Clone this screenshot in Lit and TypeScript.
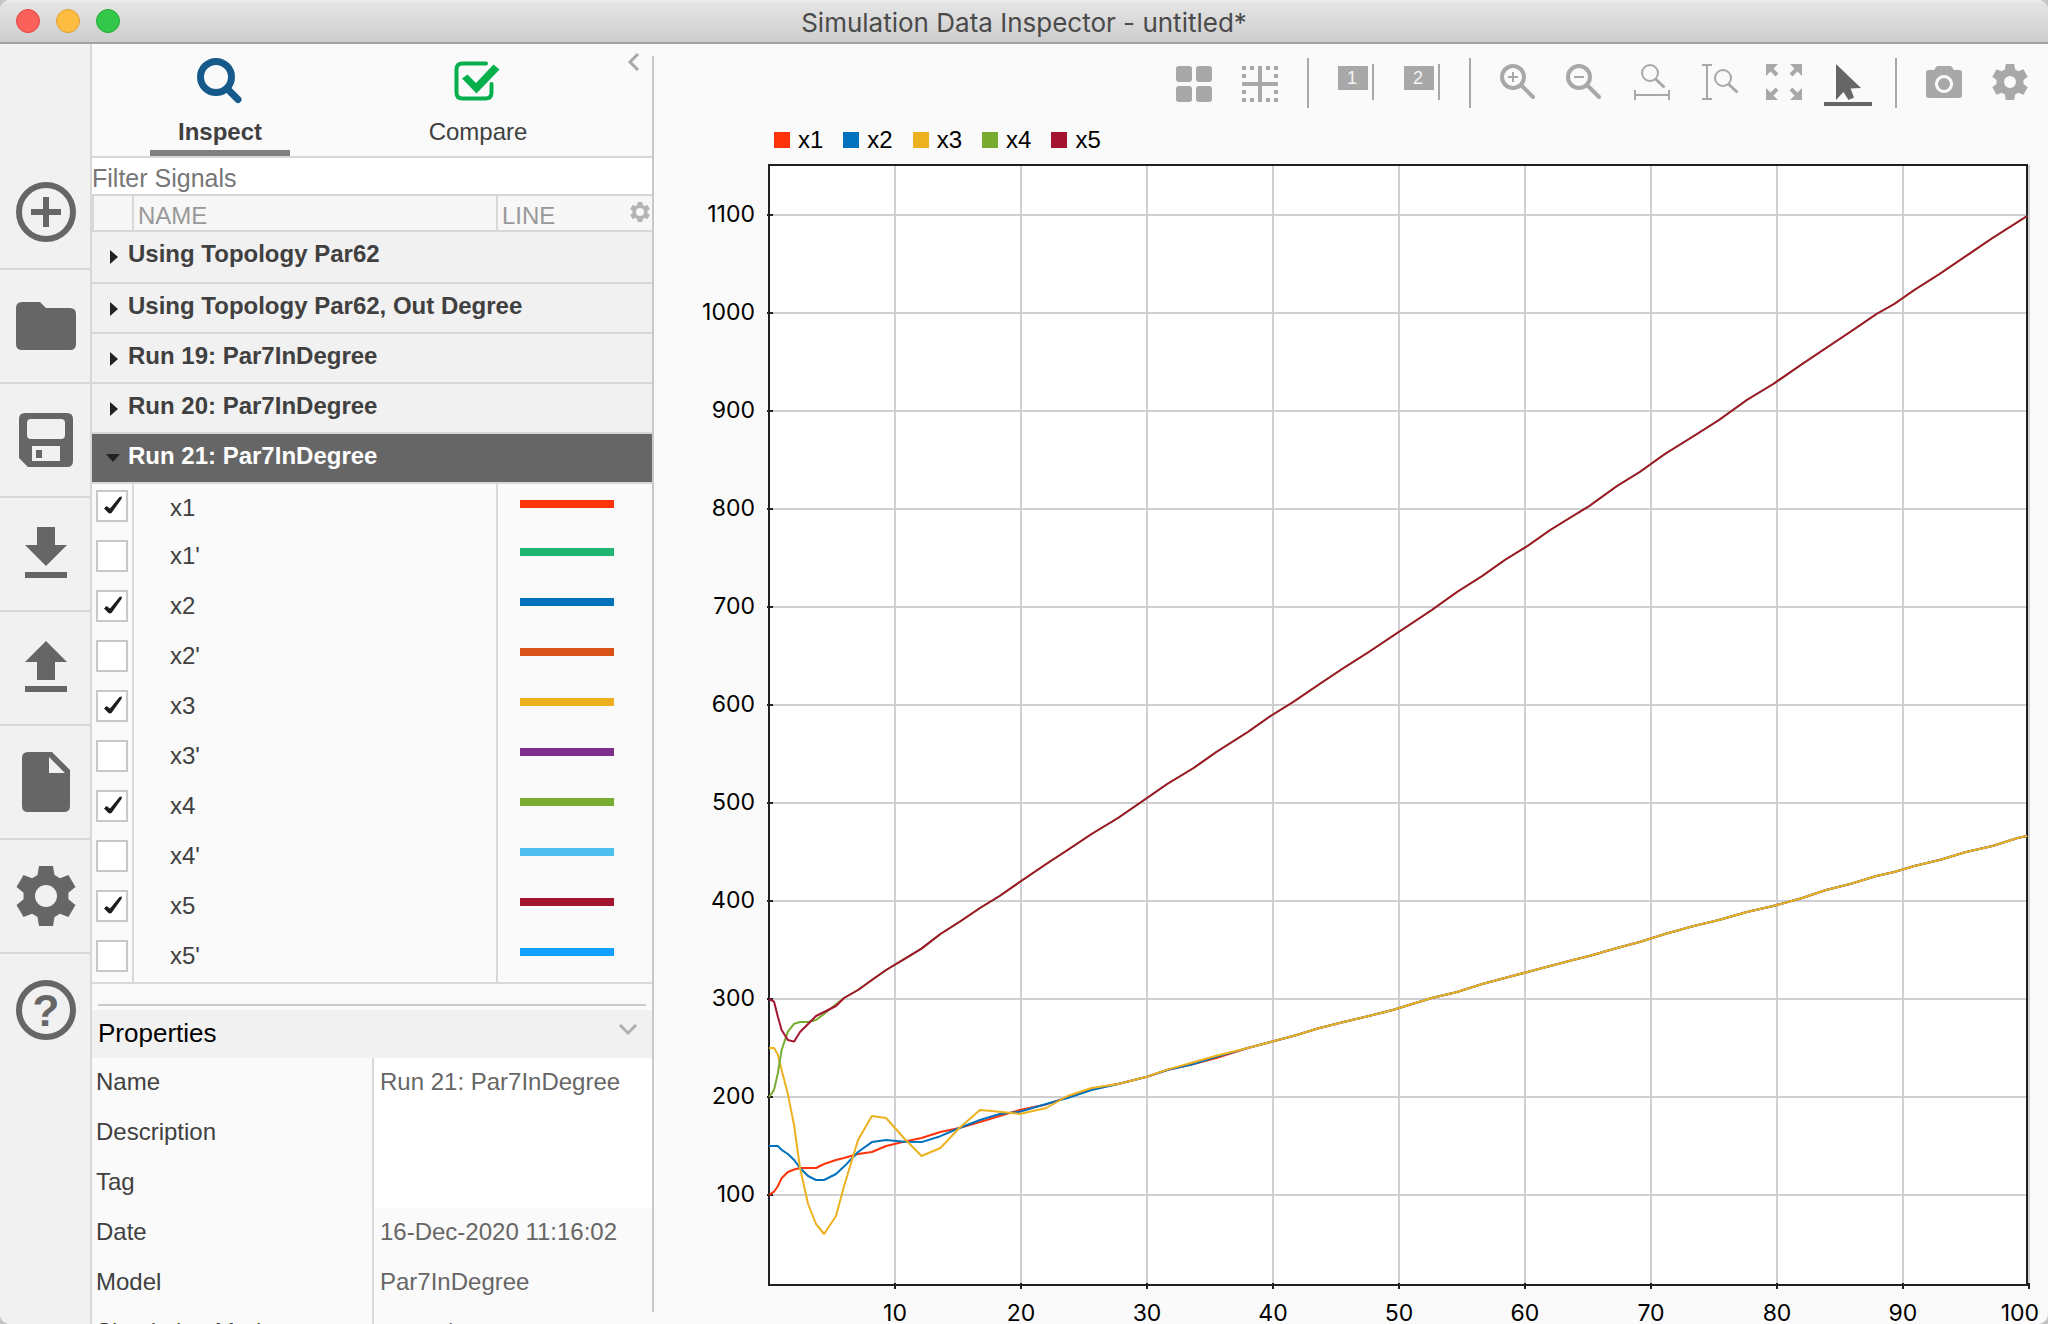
import { LitElement, html, svg, css, nothing } from "lit";
import { customElement, state } from "lit/decorators.js";
import { classMap } from "lit/directives/class-map.js";

/* Closed outline of a six-toothed gear centred on (c, c) with outer radius r. */
function gearPath(c: number, r: number, hole: number): string {
  const k = r / 30;
  const tooth = [[-8.5, -21], [-7, -30], [7, -30], [8.5, -21]];
  const points: string[] = [];
  for (let i = 0; i < 6; i++) {
    const a = (i * Math.PI) / 3;
    for (const [x, y] of tooth) {
      const px = c + k * (x * Math.cos(a) - y * Math.sin(a));
      const py = c + k * (x * Math.sin(a) + y * Math.cos(a));
      points.push(`${px.toFixed(2)} ${py.toFixed(2)}`);
    }
  }
  return `M${points.join("L")}ZM${c - hole} ${c}a${hole} ${hole} 0 1 0 ${hole * 2} 0a${hole} ${hole} 0 1 0 ${-hole * 2} 0Z`;
}

const railItems = [
  { label: "New", art: svg`<circle cx="30" cy="30" r="27" fill="none" stroke="currentColor" stroke-width="6"/><path d="M30 15v30M15 30h30" stroke="currentColor" stroke-width="6"/>` },
  { label: "Open", art: svg`<path d="M6 6h18l6 6h24q6 0 6 6v30q0 6-6 6H6q-6 0-6-6V12q0-6 6-6Z"/>` },
  { label: "Save", art: svg`<path fill-rule="evenodd" d="M9 3h42q6 0 6 6v42q0 6-6 6H12l-9-9V9q0-6 6-6ZM15 9q-4 0-4 4v12q0 4 4 4h30q4 0 4-4V13q0-4-4-4ZM16 36v15h28V36Z"/><path d="M20 40h6v8h-6z"/>` },
  { label: "Import", art: svg`<path d="M21 3h18v18h12L30 42 9 21h12ZM9 48h42v6H9Z"/>` },
  { label: "Export", art: svg`<path d="M30 3 51 24H39v18H21V24H9ZM9 48h42v6H9Z"/>` },
  { label: "Create Report", art: svg`<path fill-rule="evenodd" d="M12 0h24l18 18v36q0 6-6 6H12q-6 0-6-6V6q0-6 6-6ZM33 5v16h16Z"/>` },
  { label: "Preferences", art: svg`<path fill-rule="evenodd" d=${gearPath(30, 30, 11)}/>` },
  { label: "Help", art: svg`<circle cx="30" cy="30" r="27" fill="none" stroke="currentColor" stroke-width="6"/><text x="30" y="46" font-size="44" font-weight="bold" text-anchor="middle">?</text>` },
];

const magnifierSmall = (x: number, y: number) => svg`<circle cx=${x} cy=${y} r="8" fill="none" stroke="currentColor" stroke-width="2"/><path d=${`M${x + 5.5} ${y + 6}l9 8.5`} stroke="currentColor" stroke-width="3"/>`;
const magnifier = svg`<circle cx="19" cy="19" r="11" fill="none" stroke="currentColor" stroke-width="4"/><path d="M28.5 28.500l10.500 10.500" stroke="currentColor" stroke-width="4" stroke-linecap="round"/>`;
const cursorIcon = (n: string) => svg`<path d="M6 8h30v24H6ZM40 6h2v36h-2Z"/><text x="20" y="26" font-size="18" text-anchor="middle" fill="#f4f4f4">${n}</text>`;

const toolGroups = [
  [
    { label: "Visualizations and layouts", art: svg`<rect x="6" y="8" width="16" height="16" rx="3"/><rect x="26" y="8" width="16" height="16" rx="3"/><rect x="6" y="28" width="16" height="16" rx="3"/><rect x="26" y="28" width="16" height="16" rx="3"/>` },
    { label: "Clear plot", art: svg`<path d="M22 8h4v36h-4ZM6 24h36v4H6ZM6 8h4v4H6ZM14 8h4v4h-4ZM30 8h4v4h-4ZM38 8h4v4h-4ZM6 16h4v4H6ZM38 16h4v4h-4ZM6 32h4v4H6ZM38 32h4v4h-4ZM6 40h4v4H6ZM14 40h4v4h-4ZM30 40h4v4h-4ZM38 40h4v4h-4Z"/>` },
  ],
  [
    { label: "One data cursor", art: cursorIcon("1") },
    { label: "Two data cursors", art: cursorIcon("2") },
  ],
  [
    { label: "Zoom in", art: svg`${magnifier}<path d="M14 19h10M19 14v10" stroke="currentColor" stroke-width="2"/>` },
    { label: "Zoom out", art: svg`${magnifier}<path d="M14 19h10" stroke="currentColor" stroke-width="2"/>` },
    { label: "Zoom in time", art: svg`${magnifierSmall(24, 15)}<path d="M9 32v10M43 32v10M9 37h34" fill="none" stroke="currentColor" stroke-width="2"/>` },
    { label: "Zoom in Y", art: svg`${magnifierSmall(31, 20)}<path d="M10 7h10M10 41h10M15 7v34" fill="none" stroke="currentColor" stroke-width="2"/>` },
    { label: "Fit to view", art: svg`<path d="M8 6h12L8 18ZM44 6v12L32 6ZM8 42V30l12 12ZM44 42H32l12-12Z"/><path d="M12 10l7 7M40 10l-7 7M12 38l7-7M40 38l-7-7" stroke="currentColor" stroke-width="4"/>` },
    { label: "Arrow", active: true, art: svg`<path d="M12 6 37 30 26.500 30.500 30 39.500 24.500 42 19.500 34 12 42Z"/>` },
  ],
  [
    { label: "Snapshot", art: svg`<path fill-rule="evenodd" d="M9 12h5l3-4h14l3 4h5q3 0 3 3v22q0 3-3 3H9q-3 0-3-3V15q0-3 3-3ZM24 17a9 9 0 1 0 .01 0Z"/><circle cx="24" cy="26" r="6"/>` },
    { label: "Plot settings", art: svg`<path fill-rule="evenodd" d=${gearPath(24, 18, 6)}/>` },
  ],
];

interface Signal { name: string; color: string; plotted: boolean; }

const runs = ["Using Topology Par62", "Using Topology Par62, Out Degree", "Run 19: Par7InDegree", "Run 20: Par7InDegree", "Run 21: Par7InDegree"];

const properties = [
  { label: "Name", value: "Run 21: Par7InDegree", editable: true },
  { label: "Description", value: "", editable: true },
  { label: "Tag", value: "", editable: true },
  { label: "Date", value: "16-Dec-2020 11:16:02" },
  { label: "Model", value: "Par7InDegree" },
  { label: "Simulation Mode", value: "normal" },
];

/* Sample times of the recorded run, in seconds. */
const times = [
  0, 0.4, 0.7, 1, 1.5, 2, 2.46, 3.1, 3.73, 4.37, 5.32, 5.95, 7.06, 8.17, 9.29, 10.7, 12.1, 13.6, 15.1, 16.75, 18.3, 19.9,
  22, 23.7, 25.6, 27.7, 30, 31.6, 33.7, 35.5, 38, 39.8, 41.6, 43.7, 45.6, 47.6, 49.5, 52.6, 54.6, 56.6, 58.4, 60.2, 62,
  63.8, 65.1, 67.3, 69.1, 71.1, 73.4, 75.4, 77.6, 79.7, 82, 83.9, 85.8, 87.9, 89.3, 90.9, 92.9, 95, 97.1, 99.1, 99.85,
];

/* Transient of each signal; past its last sample a signal follows its steady ramp. */
const traces: Record<string, number[]> = {
  x1: [100, 103.4, 109, 117, 123.5, 126, 127.5, 127.5, 127.5, 131.6, 135.7, 137.8, 141.8, 143.9, 150, 154.4, 158.2, 164.3, 168.4, 174.5, 180.6, 186.7, 192.5, 199.7, 208.2, 213.3, 220.7],
  x2: [150, 150, 150, 146, 141.8, 135.7, 127.5, 119.4, 115.3, 115.3, 121.4, 129, 143.9, 154, 156, 154.4, 154, 160, 168.4, 176.5, 182.7, 185, 192.9, 199, 207.1, 213.3, 220.7, 227.6, 233.7, 241],
  x3: [250, 250, 243.5, 227.6, 203, 170.4, 127.5, 90.8, 70.4, 60.2, 78.6, 109, 156, 180.6, 178.6, 158.2, 139.8, 148, 168.4, 186.7, 185, 182.7, 188.8, 201, 209.2, 213.3, 220.7, 228, 235.5, 242],
  x4: [200, 207, 224, 248, 266.7, 274.8, 276.5, 276.5, 278.6, 284.7, 294.6, 301, 309.2, 319.4, 329.6, 340.5, 351.4],
  x5: [300, 297.3, 282, 268.4, 258.2, 256.5, 266.3, 274.5, 282.7, 286.7, 292.9, 301, 309.2, 319.4, 329.6, 340.5, 351.4],
};
const lowRamp = { end: 466.5, slope: 3.51 };
const highRamp = { end: 1100, slope: 8.517 };
const ramps: Record<string, { end: number; slope: number }> = { x1: lowRamp, x2: lowRamp, x3: lowRamp, x4: highRamp, x5: highRamp };

const plotX = (t: number) => t * 12.6;
const plotY = (v: number) => 1128 - v * 0.98;

@customElement("sdi-plot")
class SdiPlot extends LitElement {
  static properties = { signals: { attribute: false } };
  declare signals: Signal[];

  static styles = css`
    :host { display: flex; flex-direction: column; min-width: 0; min-height: 0; color: #000; }
    .legend { display: flex; gap: 20px; list-style: none; margin: 0; padding: 0 0 11px 120px; font-size: 24px; line-height: 28px; }
    .entry { display: flex; align-items: center; gap: 8px; }
    .swatch { width: 16px; height: 16px; }
    .chart { flex: 1; min-height: 0; display: grid; grid-template: minmax(0, 1fr) 39px / 115px minmax(0, 1fr); padding-right: 19px; font-family: Inter, Roboto, sans-serif; font-size: 23px; line-height: 22px; }
    .y-axis { display: grid; grid-template-rows: repeat(11, 98fr) 42fr; align-items: center; justify-items: end; padding-right: 14px; }
    .plot { display: block; width: 100%; height: 100%; overflow: visible; }
    .x-axis { grid-column: 2; display: grid; grid-template-columns: 63fr repeat(9, 126fr) 63fr 10px; align-items: end; justify-items: center; margin-right: -10px; }
    .tick-first { grid-column: 2; }
    .tick-last { grid-column: span 2; justify-self: end; }
    .tick-first { justify-self: center; }
    .grid { stroke: #cfcfd1; stroke-width: 2; }
    .frame { fill: none; stroke: #1f2122; stroke-width: 2; }
    .trace { fill: none; stroke-width: 2; stroke-linejoin: round; }
    .trace, .grid, .frame { vector-effect: non-scaling-stroke; }
  `;

  /* Ramp samples sit on a two-unit raster, which gives the long lines their fine facets. */
  private points(name: string): string {
    const values = traces[name];
    const { end, slope } = ramps[name];
    return times
      .map((t, i) => {
        const y = i < values.length ? plotY(values[i]) : Math.round((plotY(end - slope * (99.85 - t)) - 1) / 2) * 2 + 1;
        return `${plotX(t).toFixed(1)},${y.toFixed(1)}`;
      })
      .join(" ");
  }

  render() {
    const shown = this.signals.filter((s) => s.plotted && traces[s.name]);
    const yTicks = Array.from({ length: 11 }, (_, i) => 1100 - i * 100);
    const xTicks = Array.from({ length: 10 }, (_, i) => (i + 1) * 10);
    return html`
      <ul class="legend">
        ${shown.map((s) => html`<li class="entry"><span class="swatch" style="background:${s.color}"></span>${s.name}</li>`)}
      </ul>
      <div class="chart">
        <div class="y-axis">${yTicks.map((v) => html`<span>${v}</span>`)}</div>
        <svg class="plot" viewBox="0 0 1260 1120" preserveAspectRatio="none" role="img" aria-label="Signals over time">
          <rect width="1258" height="1120" fill="#fff"/>
          ${xTicks.map((t) => svg`<path class="grid" d="M${plotX(t)} 0V1120"/>`)}
          ${yTicks.map((v) => svg`<path class="grid" d="M0 ${plotY(v)}H1258"/>`)}
          <rect class="frame" width="1258" height="1120"/>
          ${xTicks.map((t) => svg`<path class="frame" d="M${plotX(t)} 1118v6"/>`)}
          ${yTicks.map((v) => svg`<path class="frame" d="M-2 ${plotY(v)}h6"/>`)}
          ${shown.map((s) => svg`<polyline class="trace" stroke=${s.color} points=${this.points(s.name)}/>`)}
        </svg>
        <div class="x-axis">
          ${xTicks.map((t) => html`<span class=${classMap({ "tick-first": t === 10, "tick-last": t === 100 })}>${t}</span>`)}
        </div>
      </div>
    `;
  }
}

@customElement("app-root")
class AppRoot extends LitElement {
  @state() private signals: Signal[] = [
    { name: "x1", color: "#ff330a", plotted: true },
    { name: "x1'", color: "#22b473", plotted: false },
    { name: "x2", color: "#0072bd", plotted: true },
    { name: "x2'", color: "#d95319", plotted: false },
    { name: "x3", color: "#edb120", plotted: true },
    { name: "x3'", color: "#7e2f8e", plotted: false },
    { name: "x4", color: "#77ac30", plotted: true },
    { name: "x4'", color: "#4dbeee", plotted: false },
    { name: "x5", color: "#a2142f", plotted: true },
    { name: "x5'", color: "#139fff", plotted: false },
  ];

  static styles = css`
    :host { display: block; height: 100vh; overflow: hidden; background: #c4c4c4; color: #404040; font-family: "Liberation Sans", Arial, sans-serif; font-size: 24px; line-height: 28px; }
    * { box-sizing: border-box; }
    button, input { margin: 0; padding: 0; border: 0; border-radius: 0; background: none; color: inherit; font: inherit; }
    button { cursor: pointer; }
    svg { display: block; fill: currentColor; }
    .window { display: flex; flex-direction: column; height: 100%; overflow: hidden; border-radius: 10px; background: #fafafa; }
    .titlebar { flex: none; display: grid; grid-template-columns: 1fr auto 1fr; align-items: center; height: 44px; padding: 0 16px; border-bottom: 2px solid #a2a2a2; background: linear-gradient(#eee, #e4e4e4 4px, #cdcdcd); }
    .lights { display: flex; gap: 16px; }
    .light { width: 24px; height: 24px; border: 1px solid #e2463f; border-radius: 50%; background: #fc605b; }
    .light.minimize { border-color: #dfa032; background: #fdbc40; }
    .light.zoom { border-color: #27aa35; background: #34c84a; }
    .title { margin: 0; padding-top: 4px; color: #4a4a4a; font-family: Inter, Roboto, sans-serif; font-size: 26px; font-weight: 400; }
    .body { flex: 1; min-height: 0; display: grid; grid-template-columns: 92px 560px 2px minmax(0, 1fr); }

    .rail { display: flex; flex-direction: column; padding-top: 112px; border-right: 2px solid #d8d8d8; background: #f1f1f1; color: #666; }
    .rail-item { flex: none; display: flex; align-items: center; justify-content: center; height: 114px; padding-left: 2px; border-bottom: 2px solid #d8d8d8; }
    .rail-item:last-child { border-bottom-color: transparent; }

    .panel { display: flex; flex-direction: column; min-height: 0; overflow: hidden; }
    .divider { margin: 12px 0; background: #c8c8c8; }
    .tabs { flex: none; display: grid; grid-template-columns: 256px 260px 1fr; justify-items: center; height: 114px; border-bottom: 2px solid #d8d8d8; }
    .tab { display: flex; flex-direction: column; align-items: center; gap: 14px; width: 140px; height: 112px; padding-top: 12px; border-bottom: 6px solid transparent; }
    .tab.selected { border-bottom-color: #808080; font-weight: bold; }
    .collapse { align-self: start; padding: 6px 0 0 7px; color: #a8a8a8; }
    .filter { flex: none; height: 38px; padding-top: 4px; border-bottom: 2px solid #d8d8d8; background: #fff; font-size: 25px; outline: none; }
    .filter::placeholder { color: #777; opacity: 1; }

    .signals { flex: none; width: 100%; table-layout: fixed; border-spacing: 0; }
    .signals th, .signals td { padding: 0; text-align: left; vertical-align: top; font-weight: 400; }
    .col-check { width: 42px; }
    .col-name { width: 364px; }
    .signals .head { height: 36px; padding: 6px 0 0 4px; border-right: 2px solid #d8d8d8; border-bottom: 2px solid #d8d8d8; background: #f7f7f7; color: #999; }
    .signals .head:first-child { border-left: 2px solid #d8d8d8; }
    .signals .head:last-child { border-right: 0; }
    .line-head { display: flex; justify-content: space-between; align-items: flex-start; padding-right: 2px; }
    .columns { color: #b4b4b4; }
    .signals .run-cell { height: 50px; border-bottom: 2px solid #d8d8d8; background: #f1f1f1; }
    .run-row:first-child .run-cell { height: 52px; }
    .signals .open .run-cell { background: #666; color: #fff; }
    .run { display: flex; gap: 7px; width: 100%; padding: 8px 0 0 13px; font-weight: bold; text-align: left; }
    .arrow { color: #222; }
    .signals .cell { height: 50px; border-right: 2px solid #d8d8d8; }
    .signals .cell:last-child { border-right: 0; }
    .signal-row:last-child .cell { border-bottom: 2px solid #d8d8d8; }
    .tick { display: grid; width: 32px; margin: 6px 0 0 4px; }
    .box { grid-area: 1 / 1; appearance: none; width: 32px; height: 32px; border: 2px solid #c8c8c8; background: #fff; }
    .mark { grid-area: 1 / 1; visibility: hidden; pointer-events: none; color: #1c1c1c; }
    .box:checked + .mark { visibility: visible; }
    .name { display: block; padding: 8px 0 0 36px; }
    .line { width: 94px; height: 8px; margin: 14px 0 0 22px; }
    .signal-row:first-child .name { padding-top: 10px; }
    .signal-row:first-child .line { margin-top: 16px; }

    .splitter { flex: none; height: 2px; margin: 20px 6px 4px; background: #c8c8c8; }
    .properties-head { flex: none; display: flex; justify-content: space-between; height: 48px; padding: 9px 14px 0 6px; background: #f1f1f1; color: #000; font-size: 26px; text-align: left; }
    .chevron { margin-top: 1px; color: #b0b0b0; }
    .properties { width: 100%; table-layout: fixed; border-spacing: 0; }
    .properties th, .properties td { height: 50px; padding: 10px 0 0 4px; text-align: left; vertical-align: top; font-weight: 400; }
    .properties th { width: 282px; border-right: 2px solid #d8d8d8; }
    .properties td { padding-left: 6px; color: #666; }
    .properties .editable { background: #fff; }
    .value { display: block; width: 100%; height: 28px; outline: none; }

    .main { display: flex; flex-direction: column; min-width: 0; min-height: 0; }
    .toolbar { flex: none; display: flex; justify-content: flex-end; gap: 18px; padding: 14px 14px 20px; color: #a8a8a8; }
    .tool { height: 48px; }
    .tool.active { color: #666; box-shadow: inset 0 -4px #666; }
    .bar { width: 2px; height: 50px; margin: 0 5px -2px; background: #a8a8a8; }
    .main sdi-plot { flex: 1; }
  `;

  private toggle(index: number) {
    this.signals = this.signals.map((s, i) => (i === index ? { ...s, plotted: !s.plotted } : s));
  }

  private renderRun(name: string, open: boolean) {
    return html`
      <tr class=${classMap({ "run-row": true, open })}>
        <td class="run-cell" colspan="3">
          <button class="run" aria-expanded=${open ? "true" : "false"}>
            <svg class="arrow" width="16" height="28" viewBox="0 0 16 28" aria-hidden="true">
              <path d=${open ? "M1 12h14l-7 8Z" : "M5 10v14l8-7Z"}/>
            </svg>
            ${name}
          </button>
        </td>
      </tr>`;
  }

  private renderSignal(signal: Signal, index: number) {
    const id = `signal-${index}`;
    return html`
      <tr class="signal-row">
        <td class="cell">
          <div class="tick">
            <input class="box" type="checkbox" id=${id} .checked=${signal.plotted} @change=${() => this.toggle(index)}>
            <svg class="mark" width="32" height="32" viewBox="0 0 32 32" aria-hidden="true">
              <path d="M8 18.500 10.500 16 14 18.500 23.500 7 26 6.500 25.500 9 15.500 23 13 23.500Z"/>
            </svg>
          </div>
        </td>
        <td class="cell"><label class="name" for=${id}>${signal.name}</label></td>
        <td class="cell"><div class="line" style="background:${signal.color}"></div></td>
      </tr>`;
  }

  render() {
    return html`
      <div class="window">
        <header class="titlebar">
          <div class="lights">
            <button class="light" aria-label="Close"></button>
            <button class="light minimize" aria-label="Minimize"></button>
            <button class="light zoom" aria-label="Zoom"></button>
          </div>
          <h1 class="title">Simulation Data Inspector - untitled*</h1>
        </header>
        <div class="body">
          <nav class="rail">
            ${railItems.map((item) => html`
              <button class="rail-item" aria-label=${item.label}>
                <svg width="60" height="60" viewBox="0 0 60 60">${item.art}</svg>
              </button>`)}
          </nav>
          <aside class="panel">
            <div class="tabs">
              <button class="tab selected">
                <svg width="48" height="48" viewBox="0 0 48 48" fill="none" stroke="#165a8c" aria-hidden="true">
                  <circle cx="20" cy="21" r="15.500" fill="none" stroke-width="7"/>
                  <path d="M31.500 33 42 43.500" stroke-width="7" stroke-linecap="round"/>
                </svg>
                Inspect
              </button>
              <button class="tab">
                <svg width="48" height="48" viewBox="0 0 48 48" aria-hidden="true">
                  <path d="M32 7.500H8.500q-6 0-6 6v23q0 6 6 6h23q6 0 6-6V28" fill="none" stroke="#05b04c" stroke-width="4" stroke-linecap="round"/>
                  <path d="M8 22.500 13.500 18.500 22 27 39.500 8.500 45.500 13.500 22.500 37.500Z" fill="#05b04c"/>
                </svg>
                Compare
              </button>
              <button class="collapse" aria-label="Collapse panel">
                <svg width="16" height="24" viewBox="0 0 16 24"><path d="M12 4 4 12l8 8" fill="none" stroke="currentColor" stroke-width="3"/></svg>
              </button>
            </div>
            <input class="filter" type="text" placeholder="Filter Signals" aria-label="Filter Signals">
            <table class="signals">
              <colgroup><col class="col-check"><col class="col-name"><col></colgroup>
              <thead>
                <tr>
                  <th class="head"></th>
                  <th class="head">NAME</th>
                  <th class="head">
                    <div class="line-head">LINE
                      <button class="columns" aria-label="Table settings">
                        <svg width="20" height="20" viewBox="0 0 20 20"><path fill-rule="evenodd" d=${gearPath(10, 10, 4)}/></svg>
                      </button>
                    </div>
                  </th>
                </tr>
              </thead>
              <tbody>${runs.map((name, i) => this.renderRun(name, i === runs.length - 1))}</tbody>
              <tbody>${this.signals.map((s, i) => this.renderSignal(s, i))}</tbody>
            </table>
            <div class="splitter"></div>
            <button class="properties-head" aria-expanded="true">
              Properties
              <svg class="chevron" width="20" height="20" viewBox="0 0 20 20" aria-hidden="true"><path d="M2 5l8 8 8-8" fill="none" stroke="currentColor" stroke-width="3"/></svg>
            </button>
            <table class="properties">
              <tbody>
                ${properties.map((p, i) => html`
                  <tr>
                    <th scope="row">${p.editable ? html`<label for="property-${i}">${p.label}</label>` : p.label}</th>
                    <td class=${p.editable ? "editable" : nothing}>
                      ${p.editable ? html`<input class="value" id="property-${i}" type="text" .value=${p.value}>` : p.value}
                    </td>
                  </tr>`)}
              </tbody>
            </table>
          </aside>
          <div class="divider"></div>
          <main class="main">
            <div class="toolbar">
              ${toolGroups.map((group, g) => html`
                ${g > 0 ? html`<span class="bar"></span>` : nothing}
                ${group.map((tool: { label: string; art: unknown; active?: boolean }) => html`
                  <button class=${classMap({ tool: true, active: !!tool.active })} aria-label=${tool.label}>
                    <svg width="48" height="48" viewBox="0 0 48 48">${tool.art}</svg>
                  </button>`)}
              `)}
            </div>
            <sdi-plot .signals=${this.signals}></sdi-plot>
          </main>
        </div>
      </div>
    `;
  }
}
